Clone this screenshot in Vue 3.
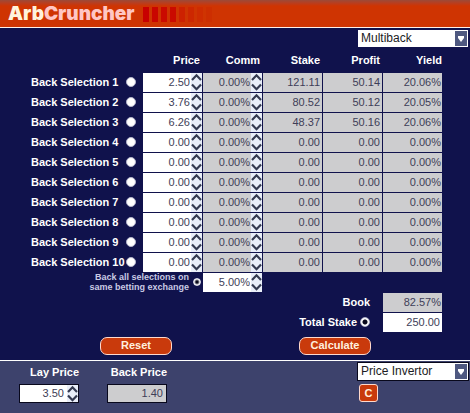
<script setup>
import { reactive, ref } from 'vue'

const rows = reactive([
  ['2.50', '0.00%', '121.11', '50.14', '20.06%'],
  ['3.76', '0.00%', '80.52', '50.12', '20.05%'],
  ['6.26', '0.00%', '48.37', '50.16', '20.06%'],
  ...Array.from({ length: 7 }, () => ['0.00', '0.00%', '0.00', '0.00', '0.00%'])
].map(([price, comm, stake, profit, gain]) => ({ price, comm, stake, profit, gain })))

const basis = ref('total')
const sameExchange = ref('yes')
const exchangeComm = ref('5.00%')
const totalStake = ref('250.00')
const layPrice = ref('3.50')
const bars = [1, 0.9, 0.8, 0.8, 0.35, 0.25, 0.15, 0.1]

function step(target, key, amount) {
  const suffix = target[key].endsWith('%') ? '%' : ''
  target[key] = Math.max(0, parseFloat(target[key]) + amount).toFixed(2) + suffix
}
function stepText(text, amount) {
  const box = { text }
  step(box, 'text', amount)
  return box.text
}
function reset() {
  rows.forEach(r => Object.assign(r, { price: '0.00', comm: '0.00%', stake: '0.00', profit: '0.00', gain: '0.00%' }))
}
</script>

<template>
  <div class="app">
    <header class="banner">
      <h1 class="logo"><span class="arb">Arb</span>Cruncher</h1>
      <div class="bars" aria-hidden="true">
        <i v-for="(o, n) in bars" :key="n" :style="{ opacity: o }"></i>
      </div>
    </header>

    <main class="board">
      <div class="toolbar">
        <div class="picker">
          <select aria-label="Calculator"><option>Multiback</option></select>
          <svg class="arrow" viewBox="0 0 12 15" aria-hidden="true"><rect width="12" height="15" /><path d="M3 5h6v2L6 11 3 7z" /></svg>
        </div>
      </div>

      <table class="sheet">
        <colgroup><col><col class="num"><col class="num"><col class="num"><col class="num"><col class="num"></colgroup>
        <thead>
          <tr><td></td><th>Price</th><th>Comm</th><th>Stake</th><th>Profit</th><th class="last">Yield</th></tr>
        </thead>
        <tbody>
          <tr v-for="(row, i) in rows" :key="i">
            <th class="name">
              <label><span>Back Selection {{ i + 1 }}</span><input v-model="basis" type="radio" name="basis" :value="i"></label>
            </th>
            <td>
              <div class="cell edit">
                <input v-model="row.price" type="text" :aria-label="`Price ${i + 1}`">
                <div class="spin">
                  <button type="button" aria-label="Increase" @click="step(row, 'price', 0.01)"><svg viewBox="0 0 11 9"><path d="M1 7 5.5 2.3 10 7" /></svg></button>
                  <button type="button" aria-label="Decrease" @click="step(row, 'price', -0.01)"><svg viewBox="0 0 11 9"><path d="M1 1.5 5.5 6.2 10 1.5" /></svg></button>
                </div>
              </div>
            </td>
            <td>
              <div class="cell">
                <input v-model="row.comm" type="text" :aria-label="`Commission ${i + 1}`">
                <div class="spin">
                  <button type="button" aria-label="Increase" @click="step(row, 'comm', 0.5)"><svg viewBox="0 0 11 9"><path d="M1 7 5.5 2.3 10 7" /></svg></button>
                  <button type="button" aria-label="Decrease" @click="step(row, 'comm', -0.5)"><svg viewBox="0 0 11 9"><path d="M1 1.5 5.5 6.2 10 1.5" /></svg></button>
                </div>
              </div>
            </td>
            <td><div class="cell out">{{ row.stake }}</div></td>
            <td><div class="cell out">{{ row.profit }}</div></td>
            <td><div class="cell out pct">{{ row.gain }}</div></td>
          </tr>
        </tbody>
        <tfoot>
          <tr>
            <th colspan="2" class="exchange">
              <label><span>Back all selections on<br>same betting exchange</span><input v-model="sameExchange" type="radio" name="exchange" value="yes"></label>
            </th>
            <td>
              <div class="cell edit">
                <input v-model="exchangeComm" type="text" aria-label="Exchange commission">
                <div class="spin">
                  <button type="button" aria-label="Increase" @click="exchangeComm = stepText(exchangeComm, 0.5)"><svg viewBox="0 0 11 9"><path d="M1 7 5.5 2.3 10 7" /></svg></button>
                  <button type="button" aria-label="Decrease" @click="exchangeComm = stepText(exchangeComm, -0.5)"><svg viewBox="0 0 11 9"><path d="M1 1.5 5.5 6.2 10 1.5" /></svg></button>
                </div>
              </div>
            </td>
            <td colspan="3"></td>
          </tr>
          <tr>
            <th colspan="5" class="sum">Book</th>
            <td><div class="cell out pct">82.57%</div></td>
          </tr>
          <tr>
            <th colspan="5" class="sum">
              <label><span>Total Stake</span><input v-model="basis" type="radio" name="basis" value="total"></label>
            </th>
            <td><div class="cell edit"><input v-model="totalStake" class="total" type="text" aria-label="Total stake amount"></div></td>
          </tr>
        </tfoot>
      </table>

      <div class="actions">
        <button type="button" class="pill" @click="reset">Reset</button>
        <button type="button" class="pill">Calculate</button>
      </div>
    </main>

    <footer class="tools">
      <div class="field">
        <label for="lay">Lay Price</label>
        <div class="cell edit boxed">
          <input id="lay" v-model="layPrice" type="text">
          <div class="spin">
            <button type="button" aria-label="Increase" @click="layPrice = stepText(layPrice, 0.01)"><svg viewBox="0 0 11 9"><path d="M1 7 5.5 2.3 10 7" /></svg></button>
            <button type="button" aria-label="Decrease" @click="layPrice = stepText(layPrice, -0.01)"><svg viewBox="0 0 11 9"><path d="M1 1.5 5.5 6.2 10 1.5" /></svg></button>
          </div>
        </div>
      </div>
      <div class="field">
        <label for="back">Back Price</label>
        <div class="cell boxed"><input id="back" type="text" value="1.40" readonly></div>
      </div>
      <div class="side">
        <div class="picker framed">
          <select aria-label="Tool"><option>Price Invertor</option></select>
          <svg class="arrow" viewBox="0 0 12 15" aria-hidden="true"><rect width="12" height="15" /><path d="M3 5h6v2L6 11 3 7z" /></svg>
        </div>
        <button type="button" class="pill clear" aria-label="Clear" @click="layPrice = '0.00'">C</button>
      </div>
    </footer>
  </div>
</template>

<style>
body {
  margin: 0;
  background: #3d426c;
}
</style>

<style scoped>
.app {
  display: flex;
  flex-direction: column;
  min-height: 100vh;
  font: bold 11px/13px "Liberation Sans", Arial, sans-serif;
  color: #fff;
}
.app * { box-sizing: border-box; }
input, select, button { font: inherit; margin: 0; padding: 0; border: 0; }

.banner {
  display: flex;
  align-items: center;
  gap: 8px;
  height: 28px;
  padding-left: 8px;
  border-bottom: 1px solid #fff0e8;
  background: linear-gradient(#9c4a38, #b83e20 3px, #cf3402 6px, #cf3402);
}
.logo {
  margin: 0;
  font: 900 19px/20px Inter, "DejaVu Sans", sans-serif;
  color: #ffc6c4;
}
.arb { color: #fff3dc; }
.bars { display: flex; gap: 3px; padding-top: 2px; }
.bars i { width: 6px; height: 15px; background: #c80000; }

.board { background: #10124c; border-bottom: 1px solid #fff; }
.toolbar { display: flex; justify-content: flex-end; padding: 2px 2px 0; }
.picker { display: grid; align-items: center; width: 110px; height: 17px; background: #fff; }
.picker select {
  grid-area: 1 / 1;
  width: 100%;
  height: 15px;
  padding-left: 3px;
  appearance: none;
  background: transparent;
  color: #1c1c24;
  font: 12px/15px "Liberation Sans", Arial, sans-serif;
}
.arrow { grid-area: 1 / 1; justify-self: end; width: 12px; height: 15px; margin-right: 1px; pointer-events: none; }
.arrow rect { fill: #4e5880; }
.arrow path { fill: #fff; }
.framed { height: 19px; width: 112px; border: 1px solid #08081c; }

.sheet { width: 100%; padding-right: 27px; table-layout: fixed; border-spacing: 0; }
.num { width: 60px; }
.sheet th, .sheet td { height: 20px; padding: 0; text-align: right; }
.sheet thead th { height: 25px; padding: 2px 3px 0 0; }
.sheet thead .last { padding-right: 1px; }
.sheet label { display: flex; align-items: center; justify-content: flex-end; gap: 3px; }
.sheet .name label { justify-content: flex-start; gap: 0; padding-left: 31px; }
.name span { width: 95px; text-align: left; white-space: nowrap; }
.sheet .exchange { padding-right: 2px; color: #c9cae4; font-size: 9px; line-height: 10px; }
.sheet .exchange label { gap: 4px; height: 20px; }
.sheet .sum { padding-right: 13px; }
input[type="radio"] {
  appearance: none;
  flex: none;
  width: 10px;
  height: 10px;
  border: 1px solid #b4b5cc;
  border-radius: 50%;
  background: #fff;
}
input[type="radio"]:checked { background: radial-gradient(circle, #08081c 2px, #fff 3px); }
.exchange input[type="radio"] { width: 8px; height: 8px; border-color: #e4e4f0; }
.exchange input[type="radio"]:checked { background: radial-gradient(circle, #08081c 1px, #fff 3px); }

.cell {
  display: flex;
  align-items: center;
  width: 59px;
  height: 19px;
  background: #cdcdcf;
  color: #3e3e58;
  font: 11px/19px "Liberation Sans", Arial, sans-serif;
}
.edit { background: #fff; }
.out { justify-content: flex-end; padding-right: 2px; }
.pct { padding-right: 1px; }
.cell input { flex: 1; min-width: 0; width: 100%; height: 17px; padding-right: 1px; background: transparent; color: inherit; text-align: right; }
.cell .total { padding-right: 2px; }
.spin { display: flex; flex-direction: column; flex: none; width: 11px; background: #e9eef9; }
.spin button { display: block; width: 11px; height: 9px; background: transparent; }
.spin button:first-child { height: 10px; }
.spin svg { display: block; width: 11px; height: 9px; fill: none; stroke: #343a50; stroke-width: 2.2; }

.actions { display: flex; justify-content: space-between; padding: 5px 99px 5px 100px; }
.pill {
  width: 72px;
  height: 18px;
  padding-bottom: 2px;
  border: 1px solid #ffd9cc;
  border-radius: 7px;
  background: #c93a0c;
  color: #fff0df;
  line-height: 13px;
}
.clear { width: 19px; border-radius: 3px; margin-left: 2px; padding: 0; }

.tools { display: flex; flex: 1; align-items: flex-start; gap: 28px; padding-left: 19px; background: #3d426c; }
.field { display: flex; flex-direction: column; align-items: flex-end; gap: 5px; padding-top: 5px; }
.boxed { width: 60px; border: 1px solid #08081c; }
.boxed .spin { height: 17px; }
.boxed .spin button { height: 8px; }
.boxed .spin button:first-child { height: 9px; }
.cell.boxed input { padding-right: 3px; }
.side { display: flex; flex-direction: column; gap: 3px; margin-left: auto; padding: 1px 1px 0 0; }
</style>
